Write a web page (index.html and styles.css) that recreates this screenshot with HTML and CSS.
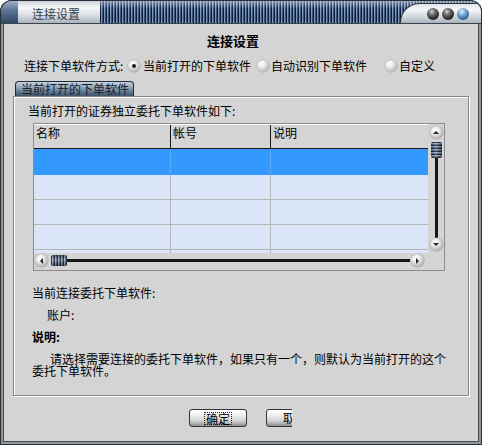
FILE: index.html
```html
<!DOCTYPE html>
<html lang="zh-CN">
<head>
<meta charset="utf-8">
<title>连接设置</title>
<link rel="stylesheet" href="styles.css">
</head>
<body>
<div class="window">
  <div class="titlebar">
    <div class="tb-corner"></div>
    <div class="tb-title">连接设置</div>
    <div class="tb-stripes">
      <div class="tb-caps">
        <span class="cap dark"></span><span class="cap dark"></span><span class="cap blue"></span>
      </div>
    </div>
  </div>
  <div class="client">
    <div class="heading">连接设置</div>
    <div class="mode-row">
      <span class="mode-label">连接下单软件方式:</span>
      <span class="radio checked"></span><span class="opt first">当前打开的下单软件</span>
      <span class="radio r2"></span><span class="opt">自动识别下单软件</span>
      <span class="radio r3"></span><span class="opt">自定义</span>
    </div>
    <div class="tab">当前打开的下单软件</div>
    <div class="group">
      <div class="caption">当前打开的证券独立委托下单软件如下:</div>
      <div class="listview">
        <div class="lv-body">
          <div class="lv-header">
            <div class="hcell c1">名称</div><div class="hcell c2">帐号</div><div class="hcell c3">说明</div>
          </div>
          <div class="lv-rows">
            <div class="row selected"><div class="cell c1"></div><div class="cell c2"></div><div class="cell c3"></div></div>
            <div class="row"><div class="cell c1"></div><div class="cell c2"></div><div class="cell c3"></div></div>
            <div class="row"><div class="cell c1"></div><div class="cell c2"></div><div class="cell c3"></div></div>
            <div class="row"><div class="cell c1"></div><div class="cell c2"></div><div class="cell c3"></div></div>
            <div class="row-rest"><div class="cell c1"></div><div class="cell c2"></div><div class="cell c3"></div></div>
          </div>
        </div>
        <div class="vscroll">
          <span class="sbtn up"></span>
          <span class="vthumb"></span>
          <span class="vtrack"></span>
          <span class="sbtn down"></span>
        </div>
        <div class="hscroll">
          <span class="sbtn left"></span>
          <span class="hthumb"></span>
          <span class="htrack"></span>
          <span class="sbtn right"></span>
        </div>
        <div class="corner"></div>
      </div>
      <div class="info">当前连接委托下单软件:</div>
      <div class="info account">账户:</div>
      <div class="info bold">说明:</div>
      <p class="note">请选择需要连接的委托下单软件，如果只有一个，则默认为当前打开的这个委托下单软件。</p>
    </div>
    <div class="buttons">
      <button class="btn"><span class="focus">确定</span></button>
      <div class="clip"><button class="btn">取消</button></div>
    </div>
  </div>
</div>
</body>
</html>
```

FILE: styles.css
```css
* { box-sizing: border-box; margin: 0; padding: 0; }

body {
  margin: 0;
  background: #ffffff;
  font-family: "Noto Sans CJK SC", "Liberation Sans", sans-serif;
  font-size: 12px;
  color: #000;
}

.window {
  width: 482px;
  height: 445px;
  background: #d4d4d4;
  border-radius: 12px 12px 0 0;
  overflow: hidden;
  display: flex;
  flex-direction: column;
  box-shadow: inset 0 0 0 1px #2c3034, inset 0 0 0 3px #8e969e, inset 0 0 0 4px #454b52;
}

/* ---------- title bar ---------- */
.titlebar {
  height: 24px;
  flex: none;
  display: flex;
  border: 1px solid #26303a;
  border-bottom-color: #3a444e;
  border-radius: 12px 12px 0 0;
  overflow: hidden;
}
.tb-corner {
  width: 17px;
  background: linear-gradient(#a2b4c8, #5e7896 40%, #2e4764);
}
.tb-title {
  width: 82px;
  padding: 3px 0 0 14px;
  line-height: 20px;
  color: #33414f;
  background: linear-gradient(#cdd3d9, #f6f7f9 30%, #dde2e7 60%, #a9b3bd);
}
.tb-stripes {
  flex: 1;
  display: flex;
  justify-content: flex-end;
  background:
    linear-gradient(rgba(255,255,255,.45), rgba(255,255,255,0) 35%, rgba(0,0,0,.12) 80%, rgba(0,0,0,0)),
    repeating-linear-gradient(90deg, #0f1f3a 0 1px, #86a2c6 1px 2px, #3b5984 2px 3px);
}
.tb-caps {
  width: 81px;
  margin-top: 2px;
  border-top: 1px solid #2a3846;
  border-left: 1px solid #2a3846;
  border-top-left-radius: 20px 19px;
  background: linear-gradient(#dfe4e9, #f5f7f8 30%, #d2d8de 65%, #a9b3bd);
  display: flex;
  align-items: center;
  gap: 3px;
  padding-left: 26px;
}
.cap {
  width: 12px;
  height: 12px;
  border-radius: 50%;
  flex: none;
}
.cap.dark {
  background: radial-gradient(circle at 40% 30%, #d8d8d8 0, #7a7a7a 25%, #2a2a2a 65%, #0e0e0e 100%);
}
.cap.blue {
  background: radial-gradient(circle at 40% 30%, #eaf4ff 0, #86b2de 30%, #2e5e94 72%, #16304e 100%);
}

/* ---------- client ---------- */
.client {
  flex: 1;
  margin: 0 4px 4px;
  padding-top: 9px;
}
.heading {
  font-weight: bold;
  font-size: 13px;
  line-height: 16px;
  padding-left: 203px;
}
.mode-row {
  display: flex;
  align-items: center;
  height: 16px;
  line-height: 16px;
  margin-top: 9px;
  padding-left: 20px;
}
.mode-label { width: 104px; }
.radio {
  width: 12px;
  height: 12px;
  border-radius: 50%;
  flex: none;
  background: radial-gradient(circle at 38% 32%, #ffffff 0, #ececec 30%, #bababa 70%, #8c8c8c 100%);
  box-shadow: 0 0 0 0.5px #a2a2a2;
  display: flex;
  align-items: center;
  justify-content: center;
}
.radio.checked::after {
  content: "";
  width: 4px;
  height: 4px;
  border-radius: 50%;
  background: #1e1e1e;
}
.opt { margin-left: 2px; }
.opt.first { margin-left: 3px; }
.r2 { margin-left: 6px; }
.r3 { margin-left: 18px; }

.tab {
  margin: 7px 0 0 11px;
  width: 119px;
  height: 15px;
  padding-left: 5px;
  line-height: 14px;
  color: #13202e;
  border: 1px solid #1f2d3c;
  border-bottom: 0;
  border-radius: 4px 4px 0 0;
  background: linear-gradient(#c9d3dd, #8fa2b6 40%, #5a7088 75%, #405569);
}

/* ---------- group ---------- */
.group {
  margin-left: 9px;
  width: 456px;
  height: 300px;
  border: 1px solid #888888;
  box-shadow: inset 1px 1px 0 #ffffff, 1px 1px 0 #ffffff;
  padding: 8px 0 0 14px;
}
.caption { line-height: 12px; }

.listview {
  margin: 6px 0 0 5px;
  width: 412px;
  height: 148px;
  border: 1px solid #8c8c8c;
  display: grid;
  grid-template-columns: 394px 16px;
  grid-template-rows: 129px 17px;
  background: #d4d4d4;
}
.lv-header {
  height: 25px;
  display: flex;
  border-top: 1px solid #ffffff;
  border-bottom: 1px solid #1a1a1a;
  background: #d4d4d4;
}
.hcell {
  padding: 1px 0 0 2px;
  line-height: 14px;
  border-right: 1px solid #1a1a1a;
}
.c1 { width: 137px; }
.c2 { width: 100px; }
.c3 { flex: 1; border-right: 0; }
.lv-rows {
  height: 104px;
  background: #dae5f7;
}
.row {
  height: 25px;
  display: flex;
  border-bottom: 1px solid #b5b5b5;
}
.row.selected {
  height: 26px;
  background: #3399ff;
  border-bottom-color: #3399ff;
}
.row-rest { height: 3px; display: flex; }
.cell { border-right: 1px solid #b5b5b5; }
.cell.c3 { border-right: 0; }
.row.selected .cell { border-right-color: #5eabf7; }
.row.selected .cell.c3 { border-right: 0; }

.vscroll {
  display: flex;
  flex-direction: column;
  align-items: center;
  padding: 2px 0;
}
.hscroll {
  display: flex;
  align-items: center;
  padding: 0 4px 2px 1px;
}
.sbtn {
  width: 13px;
  height: 13px;
  flex: none;
  border-radius: 50%;
  background: radial-gradient(circle at 40% 35%, #ffffff 0, #ececec 30%, #bcbcbc 65%, #7e7e7e 100%);
  box-shadow: 0 0 0 0.5px #a0a0a0;
  display: flex;
  align-items: center;
  justify-content: center;
}
.sbtn::after { content: ""; }
.sbtn.up::after { border-left: 3px solid transparent; border-right: 3px solid transparent; border-bottom: 3px solid #1b2636; }
.sbtn.down::after { border-left: 3px solid transparent; border-right: 3px solid transparent; border-top: 3px solid #1b2636; }
.sbtn.left::after { border-top: 3px solid transparent; border-bottom: 3px solid transparent; border-right: 3px solid #1b2636; }
.sbtn.right::after { border-top: 3px solid transparent; border-bottom: 3px solid transparent; border-left: 3px solid #1b2636; }

.vthumb {
  width: 11px;
  height: 16px;
  margin-top: 3px;
  flex: none;
  border-radius: 2px;
  background:
    linear-gradient(90deg, rgba(0,0,0,.35), rgba(255,255,255,.15) 45%, rgba(0,0,0,.45)),
    repeating-linear-gradient(180deg, #17253a 0 1px, #a3b6ca 1px 2px, #5a7090 2px 3px);
}
.vtrack {
  width: 3px;
  flex: 1;
  background: #161616;
}
.hthumb {
  width: 16px;
  height: 11px;
  margin-left: 3px;
  flex: none;
  border-radius: 2px;
  background:
    linear-gradient(180deg, rgba(0,0,0,.35), rgba(255,255,255,.15) 45%, rgba(0,0,0,.45)),
    repeating-linear-gradient(90deg, #17253a 0 1px, #a3b6ca 1px 2px, #5a7090 2px 3px);
}
.htrack {
  height: 3px;
  flex: 1;
  background: #161616;
}
.sbtn.right { margin-left: 1px; }

.info {
  margin: 16px 0 0 4px;
  line-height: 12px;
}
.info.account { margin: 10px 0 0 19px; }
.info.bold { margin-top: 10px; font-weight: bold; }
.note {
  margin: 10px 0 0 4px;
  width: 420px;
  line-height: 12px;
  text-indent: 18px;
}

/* ---------- buttons ---------- */
.buttons {
  display: flex;
  gap: 19px;
  margin-top: 13px;
  padding-left: 185px;
}
.btn {
  width: 58px;
  height: 18px;
  flex: none;
  padding: 0;
  font: inherit;
  line-height: 12px;
  color: #000;
  border: 1px solid #353535;
  border-radius: 3px;
  background: linear-gradient(#ffffff, #eeeeee 35%, #cfcfcf 70%, #8f8f8f);
  display: flex;
  align-items: center;
  justify-content: center;
}
.focus {
  border: 1px dotted #222;
  padding: 0 1px;
  line-height: 11px;
}
.clip {
  width: 26px;
  overflow: hidden;
  flex: none;
}
```
